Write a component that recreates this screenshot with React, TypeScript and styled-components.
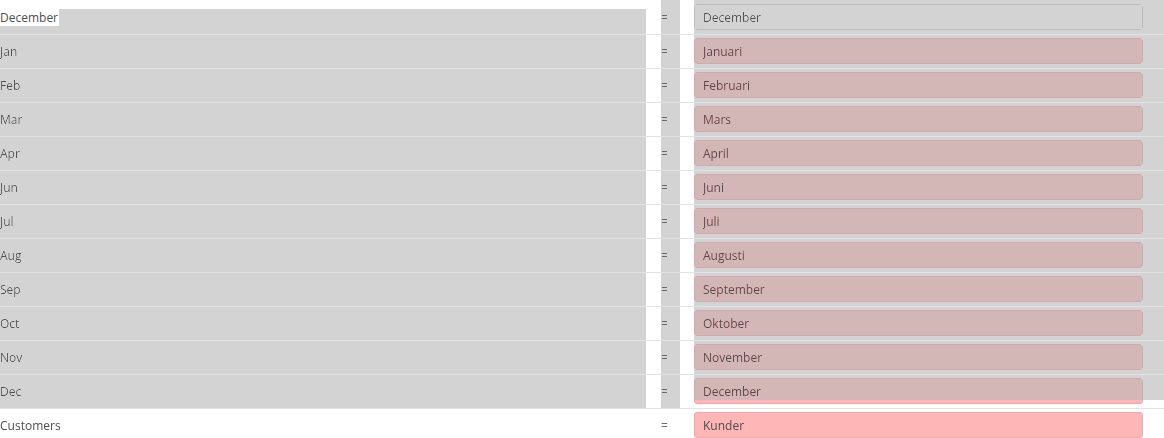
import React from "react";
import styled, { createGlobalStyle } from "styled-components";

const Global = createGlobalStyle`
  html, body { margin: 0; padding: 0; background: #fff; }
  body { font-family: "Open Sans", "Liberation Sans", sans-serif; font-size: 12px; color: #4d4d4d; }
  * { box-sizing: border-box; }
`;

const Page = styled.div`
  position: relative;
  width: 1164px;
  height: 438px;
  overflow: hidden;
`;

const Row = styled.div`
  position: relative;
  display: grid;
  grid-template-columns: 661px 33px 449px 21px;
  align-items: center;
  height: 34px;
  &::after {
    content: "";
    position: absolute;
    left: 0;
    right: 0;
    bottom: -1px;
    height: 1px;
    background: #e3e3e3;
    z-index: 3;
  }
`;

const Label = styled.div<{ $raised?: boolean }>`
  display: flex;
  align-items: center;
  height: 100%;
  span {
    line-height: 17px;
    padding-right: 1px;
    background: ${(p) => (p.$raised ? "#fff" : "transparent")};
    position: ${(p) => (p.$raised ? "relative" : "static")};
    z-index: ${(p) => (p.$raised ? 4 : "auto")};
  }
`;

const Equals = styled.div`
  color: #6a6a6a;
  font-size: 12px;
  line-height: 17px;
`;

const Field = styled.input<{ $missing?: boolean }>`
  width: 449px;
  height: 26px;
  margin: 0;
  padding: 0 8px;
  border-radius: 3px;
  border: 1px solid ${(p) => (p.$missing ? "#eeaaaa" : "#bcbcbc")};
  background: ${(p) => (p.$missing ? "#ffb6b6" : "#fff")};
  font-family: "Open Sans", "Liberation Sans", sans-serif;
  font-size: 12px;
  color: #4d4d4d;
  outline: none;
`;

const Shade = styled.div`
  position: absolute;
  background: #d3d3d3;
  mix-blend-mode: darken;
  z-index: 2;
  pointer-events: none;
`;

type Entry = { key: string; value: string; missing: boolean };

const entries: Entry[] = [
  { key: "December", value: "December", missing: false },
  { key: "Jan", value: "Januari", missing: true },
  { key: "Feb", value: "Februari", missing: true },
  { key: "Mar", value: "Mars", missing: true },
  { key: "Apr", value: "April", missing: true },
  { key: "Jun", value: "Juni", missing: true },
  { key: "Jul", value: "Juli", missing: true },
  { key: "Aug", value: "Augusti", missing: true },
  { key: "Sep", value: "September", missing: true },
  { key: "Oct", value: "Oktober", missing: true },
  { key: "Nov", value: "November", missing: true },
  { key: "Dec", value: "December", missing: true },
  { key: "Customers", value: "Kunder", missing: true },
];

export default function App() {
  return (
    <>
      <Global />
      <Page>
        {entries.map((e, i) => (
          <Row key={i}>
            <Label $raised={i === 0}>
              <span>{e.key}</span>
            </Label>
            <Equals>=</Equals>
            <Field $missing={e.missing} defaultValue={e.value} readOnly />
            <div />
          </Row>
        ))}
        <Shade style={{ left: 0, top: 9, width: 646, height: 399 }} />
        <Shade style={{ left: 661, top: 0, width: 19, height: 408 }} />
        <Shade style={{ left: 694, top: 0, width: 470, height: 400 }} />
      </Page>
    </>
  );
}
